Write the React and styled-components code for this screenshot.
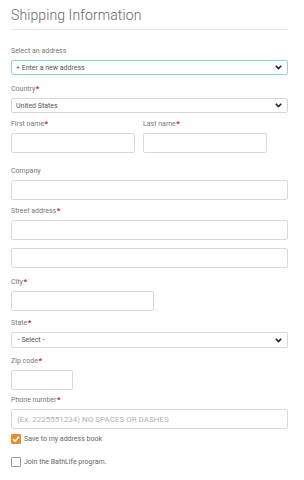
import React from 'react';
import styled, { createGlobalStyle } from 'styled-components';

const GlobalStyle = createGlobalStyle`
  * { box-sizing: border-box; }
  body {
    margin: 0;
    background: #fff;
    font-family: Roboto, 'Liberation Sans', sans-serif;
    color: #555;
  }
`;

function Chevron() {
  return (
    <svg width='7' height='5' viewBox='0 0 7 5'>
      <path d='M0.8 0.8 L3.5 3.6 L6.2 0.8' fill='none' stroke='#222' strokeWidth='1.6' />
    </svg>
  );
}

function Check() {
  return (
    <svg width='9' height='8' viewBox='0 0 9 8'>
      <path d='M1.2 4.2 L3.5 6.4 L7.8 1.4' fill='none' stroke='#fff' strokeWidth='1.7' />
    </svg>
  );
}

function Label({ children, required }) {
  return (
    <LabelText>
      {children}
      {required && <Star>*</Star>}
    </LabelText>
  );
}

function App() {
  return (
    <Wrapper>
      <GlobalStyle />
      <Title>Shipping Information</Title>
      <form>
        <Field $mb={9}>
          <Label>Select an address</Label>
          <Select $focus>
            <span>+ Enter a new address</span>
            <Chevron />
          </Select>
        </Field>
        <Field $mb={6}>
          <Label required>Country</Label>
          <Select>
            <span>United States</span>
            <Chevron />
          </Select>
        </Field>
        <Row>
          <Field $mb={13}>
            <Label required>First name</Label>
            <Input />
          </Field>
          <Field $mb={13}>
            <Label required>Last name</Label>
            <Input />
          </Field>
        </Row>
        <Field $mb={6}>
          <Label>Company</Label>
          <Input />
        </Field>
        <Field $mb={8}>
          <Label required>Street address</Label>
          <Input />
        </Field>
        <Field $mb={9}>
          <Input />
        </Field>
        <Field $mb={7}>
          <Label required>City</Label>
          <Input $w='143px' />
        </Field>
        <Field $mb={8}>
          <Label required>State</Label>
          <Select $h={16}>
            <span>&nbsp;- Select -</span>
            <Chevron />
          </Select>
        </Field>
        <Field $mb={5}>
          <Label required>Zip code</Label>
          <Input $w='62px' />
        </Field>
        <Field $mb={5}>
          <Label required>Phone number</Label>
          <Input placeholder='(Ex. 2225551234) NO SPACES OR DASHES' />
        </Field>
        <CheckRow $mb={13}>
          <Box $checked>
            <Check />
          </Box>
          <span>Save to my address book</span>
        </CheckRow>
        <CheckRow>
          <Box />
          <span>Join the BathLife program.</span>
        </CheckRow>
      </form>
    </Wrapper>
  );
}

const Wrapper = styled.section`
  width: 288px;
  padding: 7px 0 0 11px;
`;

const Title = styled.h2`
  margin: 0 0 16px;
  padding-bottom: 6px;
  border-bottom: 1px solid #ebebeb;
  font-size: 14px;
  line-height: 16px;
  font-weight: 300;
  color: #666;
  letter-spacing: 0.1px;
`;

const Field = styled.div`
  display: flex;
  flex-direction: column;
  margin-bottom: ${(p) => p.$mb || 0}px;
`;

const Row = styled.div`
  display: grid;
  grid-template-columns: 124px 124px;
  column-gap: 8px;
`;

const LabelText = styled.label`
  font-size: 7px;
  line-height: 10px;
  height: 10px;
  margin-bottom: 4px;
  color: #777;
`;

const Star = styled.span`
  color: #d0202e;
  font-size: 8px;
  font-weight: 700;
  margin-left: 0.5px;
`;

const Select = styled.div`
  display: flex;
  align-items: center;
  justify-content: space-between;
  width: 277px;
  height: ${(p) => p.$h || 15}px;
  padding: 0 5px 0 4px;
  border: 1px solid ${(p) => (p.$focus ? '#94d0dc' : '#d6d6d6')};
  border-radius: 2px;
  font-size: 7px;
  color: #555;
`;

const Input = styled.input`
  width: ${(p) => p.$w || '100%'};
  height: 20px;
  padding: 0 5px;
  border: 1px solid #d9d9d9;
  border-radius: 2px;
  font-family: Roboto, 'Liberation Sans', sans-serif;
  font-size: 8px;
  outline: none;
  &::placeholder {
    color: #b0b0b0;
  }
`;

const CheckRow = styled.div`
  display: flex;
  align-items: center;
  gap: 3px;
  margin-bottom: ${(p) => p.$mb || 0}px;
  font-size: 7px;
  color: #666;
`;

const Box = styled.span`
  display: flex;
  align-items: center;
  justify-content: center;
  width: 10px;
  height: 10px;
  border-radius: 1px;
  background: ${(p) => (p.$checked ? '#ee8a2c' : '#fff')};
  border: 1px solid ${(p) => (p.$checked ? '#ee8a2c' : '#9a9a9a')};
`;

export default App;
